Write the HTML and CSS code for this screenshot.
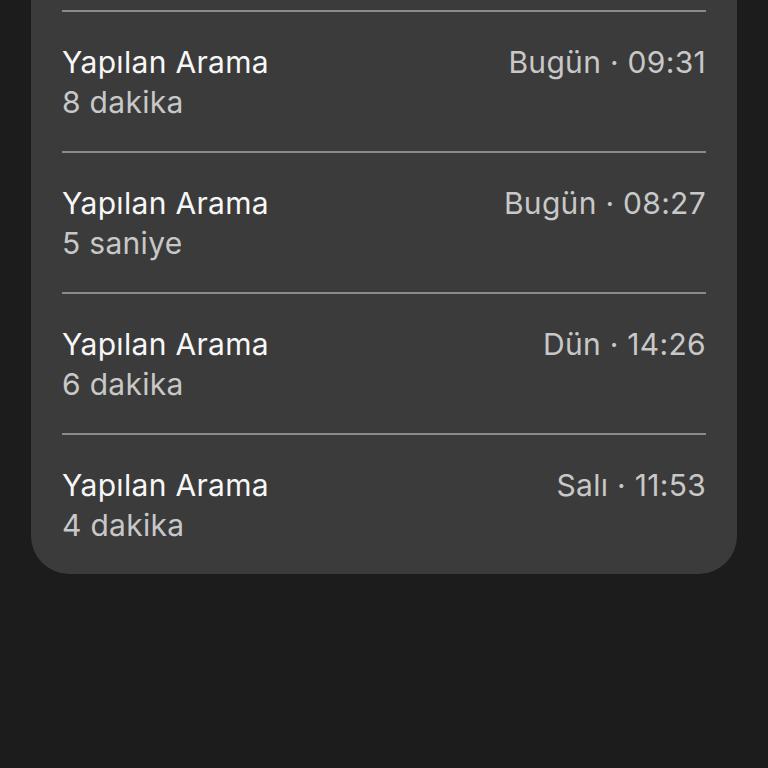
FILE: index.html
```html
<!DOCTYPE html>
<html>
<head>
    <title>Arama Geçmişi</title>
    <meta name="viewport" content="width=device-width, initial-scale=1.0">
    <link rel="stylesheet" href="styles.css">
</head>
<body>
    <div class="card">
        <div class="call-row">
            <div class="call-info">
                <div class="call-type">Yapılan Arama</div>
                <div class="call-duration">8 dakika</div>
            </div>
            <div class="call-time">Bugün · 09:31</div>
        </div>
        <div class="call-row">
            <div class="call-info">
                <div class="call-type">Yapılan Arama</div>
                <div class="call-duration">5 saniye</div>
            </div>
            <div class="call-time">Bugün · 08:27</div>
        </div>
        <div class="call-row">
            <div class="call-info">
                <div class="call-type">Yapılan Arama</div>
                <div class="call-duration">6 dakika</div>
            </div>
            <div class="call-time">Dün · 14:26</div>
        </div>
        <div class="call-row">
            <div class="call-info">
                <div class="call-type">Yapılan Arama</div>
                <div class="call-duration">4 dakika</div>
            </div>
            <div class="call-time">Salı · 11:53</div>
        </div>
    </div>
</body>
</html>
```

FILE: styles.css
```css
body {
    margin: 0;
    background: #1c1c1c;
    font-family: Inter, "Noto Sans", sans-serif;
    min-height: 100vh;
}
.card {
    margin: 0 31px;
    padding-top: 10px;
    background: #3b3b3b;
    border-radius: 0 0 38px 38px;
}
.call-row {
    display: flex;
    justify-content: space-between;
    align-items: flex-start;
    margin: 0 31px;
    padding: 30px 0 29px;
    border-top: 2px solid #8a8a8a;
}
.call-type,
.call-duration,
.call-time {
    font-size: 30px;
    line-height: 40px;
    letter-spacing: 0.3px;
}
.call-type {
    color: #f7f7f7;
}
.call-duration,
.call-time {
    color: #c8c8c8;
}
```
